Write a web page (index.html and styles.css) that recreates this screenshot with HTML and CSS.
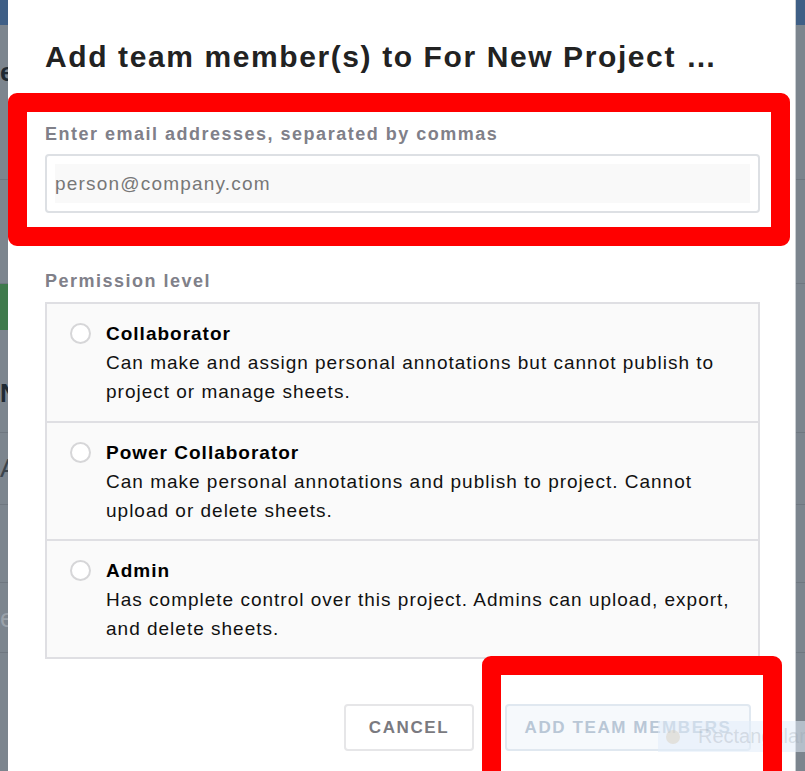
FILE: index.html
```html
<!DOCTYPE html>
<html lang="en">
<head>
    <meta charset="UTF-8">
    <meta name="viewport" content="width=device-width, initial-scale=1.0">
    <title>Add team members</title>
    <link rel="stylesheet" href="styles.css">
</head>
<body>

    <div class="backdrop">
        <div class="app-header"></div>
        <div class="app-row first"><span>e</span></div>
        <div class="app-row second"></div>
        <div class="app-row green"><span class="badge"></span></div>
        <div class="app-row fourth"><span>N</span></div>
        <div class="app-row fifth"><span class="light">A</span></div>
        <div class="app-row sixth"></div>
        <div class="app-row seventh"><span class="faint">e</span></div>
    </div>

    <div class="modal">
        <h1 class="modal-title">Add team member(s) to For New Project …</h1>

        <label class="field-label" for="emails">Enter email addresses, separated by commas</label>
        <div class="email-box">
            <input type="text" id="emails" placeholder="person@company.com">
        </div>

        <div class="field-label perm-label">Permission level</div>
        <div class="options">
            <label class="option">
                <span class="radio"></span>
                <span class="option-text">
                    <strong>Collaborator</strong>
                    <span>Can make and assign personal annotations but cannot publish to project or manage sheets.</span>
                </span>
            </label>
            <label class="option">
                <span class="radio"></span>
                <span class="option-text">
                    <strong>Power Collaborator</strong>
                    <span>Can make personal annotations and publish to project. Cannot upload or delete sheets.</span>
                </span>
            </label>
            <label class="option">
                <span class="radio"></span>
                <span class="option-text">
                    <strong>Admin</strong>
                    <span>Has complete control over this project. Admins can upload, export, and delete sheets.</span>
                </span>
            </label>
        </div>

        <div class="actions">
            <button class="btn btn-cancel">CANCEL</button>
            <button class="btn btn-add" disabled>ADD TEAM MEMBERS</button>
        </div>
    </div>

    <div class="toast">
        <span class="toast-dot"></span>
        <span class="toast-text">Rectangular Selection</span>
    </div>

    <!-- annotation boxes drawn on top of the screenshot -->
    <div class="mark mark-email"></div>
    <div class="mark mark-button"></div>

</body>
</html>
```

FILE: styles.css
```css
* {
    box-sizing: border-box;
}

body {
    margin: 0;
    width: 805px;
    height: 771px;
    overflow: hidden;
    position: relative;
    background-color: #7c858e;
    font-family: 'Liberation Sans', Arial, sans-serif;
    color: #111;
}

/* page behind the dialog, dimmed */
.backdrop {
    display: flex;
    flex-direction: column;
}

.app-header {
    height: 25px;
    background-color: #3f5f86;
}

.app-row {
    border-bottom: 1px solid #6f7780;
    font-size: 26px;
    font-weight: bold;
    color: #1f2a33;
}

.app-row.first {
    height: 155px;
    padding-top: 32px;
}

.app-row.second {
    height: 104px;
}

.app-row.green {
    height: 46px;
    border-bottom: none;
}

.badge {
    display: block;
    width: 300px;
    height: 46px;
    background-color: #3f7a4c;
}

.app-row.fourth {
    height: 103px;
    padding-top: 48px;
}

.app-row.fifth {
    height: 72px;
    padding-top: 20px;
}

.app-row.sixth {
    height: 78px;
}

.app-row.seventh {
    height: 70px;
    padding-top: 20px;
}

.light {
    color: #3b444c;
    font-weight: normal;
}

.faint {
    color: #9aa2aa;
    font-weight: normal;
}

.modal {
    position: absolute;
    top: 0;
    left: 8px;
    width: 788px;
    height: 771px;
    background-color: #fff;
    padding: 35px 35px 0 37px;
    border-right: 1px solid #c9cdd1;
}

.modal-title {
    margin: 0 0 44px;
    font-size: 30px;
    font-weight: bold;
    letter-spacing: 1.6px;
    line-height: 44px;
    color: #222;
}

.field-label {
    display: block;
    font-size: 18px;
    font-weight: bold;
    letter-spacing: 1.5px;
    color: #808089;
    line-height: 22px;
}

.email-box {
    margin-top: 9px;
    padding: 8px;
    border: 2px solid #dde0e4;
    border-radius: 4px;
}

.email-box input {
    width: 100%;
    height: 39px;
    border: none;
    outline: none;
    padding: 0;
    background-color: #f9f9f9;
    font-family: inherit;
    font-size: 19px;
    letter-spacing: 1.2px;
    color: #333;
}

.email-box input::placeholder {
    color: #777;
}

.perm-label {
    margin-top: 57px;
}

.options {
    margin-top: 10px;
    border: 2px solid #dfdfe3;
    background-color: #fafafa;
}

.option {
    display: flex;
    align-items: flex-start;
    gap: 15px;
    padding: 15px 20px 14px 23px;
    height: 118px;
    border-top: 2px solid #dfdfe3;
    cursor: pointer;
}

.option:first-child {
    border-top: none;
    height: 117px;
}

.radio {
    flex: none;
    width: 21px;
    height: 21px;
    margin-top: 4px;
    border: 2px solid #d6d6d8;
    border-radius: 50%;
    background-color: #fff;
}

.option-text {
    display: flex;
    flex-direction: column;
    font-size: 19px;
    letter-spacing: 1px;
    line-height: 29px;
    color: #111;
}

.option-text strong {
    color: #000;
}

.actions {
    display: flex;
    justify-content: flex-end;
    gap: 31px;
    margin-top: 45px;
    padding-right: 9px;
}

.btn {
    height: 47px;
    padding: 0;
    border-radius: 4px;
    font-family: inherit;
    font-size: 17px;
    font-weight: bold;
    letter-spacing: 1.6px;
    white-space: nowrap;
    cursor: pointer;
}

.btn-cancel {
    width: 130px;
    border: 2px solid #e6e6e8;
    background-color: #fff;
    color: #7a7a80;
}

.btn-add {
    width: 246px;
    border: 2px solid #e0e8f0;
    background-color: #f6f9fc;
    color: #b9c7d6;
    cursor: default;
}

.toast {
    position: absolute;
    left: 658px;
    top: 721px;
    width: 147px;
    height: 31px;
    overflow: hidden;
    display: flex;
    align-items: center;
    gap: 18px;
    padding-left: 8px;
    background-color: rgba(225, 237, 250, 0.55);
    font-size: 20px;
    color: rgba(150, 160, 170, 0.3);
    white-space: nowrap;
}

.toast-dot {
    flex: none;
    width: 14px;
    height: 14px;
    border-radius: 50%;
    background-color: rgba(215, 205, 185, 0.45);
}

.mark {
    position: absolute;
    border: 19px solid #ff0000;
    border-radius: 9px;
}

.mark-email {
    left: 8px;
    top: 93px;
    width: 782px;
    height: 153px;
}

.mark-button {
    left: 482px;
    top: 656px;
    width: 300px;
    height: 140px;
}
```
